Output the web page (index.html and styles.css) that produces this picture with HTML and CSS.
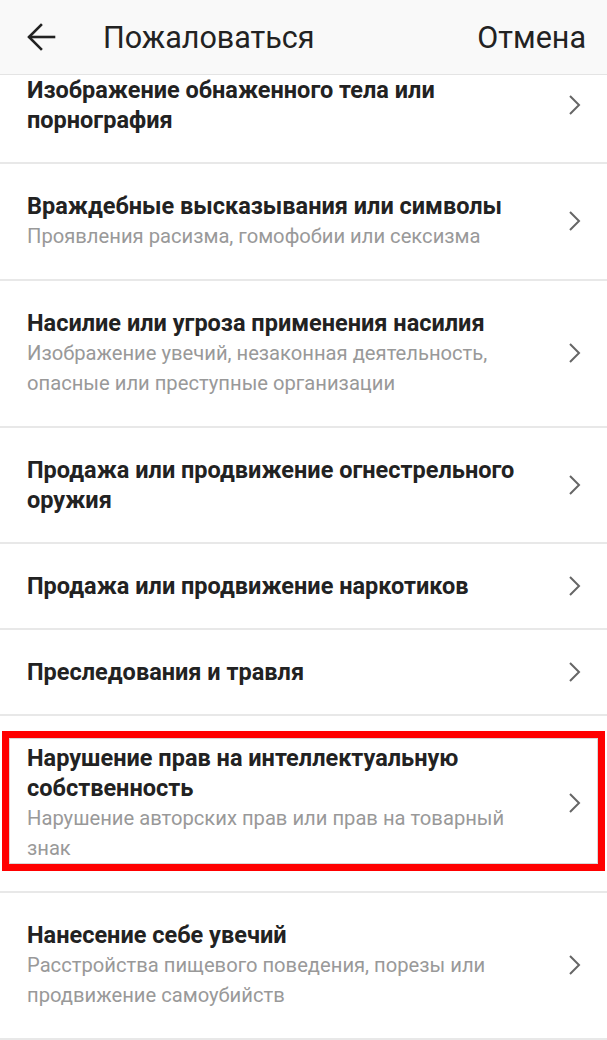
FILE: index.html
```html
<!DOCTYPE html>
<html lang="ru">
<head>
  <meta charset="UTF-8" />
  <title>Пожаловаться</title>
  <meta name="viewport" content="width=device-width, initial-scale=1" />
  <link rel="stylesheet" href="styles.css">
</head>
<body>
<div class="app">
  <header class="topbar">
    <button class="back-btn" title="Назад">
      <svg width="30" height="30" viewBox="0 0 30 30" fill="none" stroke="#222" stroke-width="2.6" stroke-linecap="square">
        <path d="M28 15H4"/>
        <path d="M15 3L3 15l12 12"/>
      </svg>
    </button>
    <h1>Пожаловаться</h1>
    <div class="cancel">Отмена</div>
  </header>

  <main class="list-wrap">
    <ul class="reasons">
      <li class="reason">
        <div class="reason-text">
          <div class="reason-title">Изображение обнаженного тела или порнография</div>
        </div>
        <svg class="chevron" width="14" height="22" viewBox="0 0 14 22"><path d="M2 2l9 9-9 9"/></svg>
      </li>
      <li class="reason">
        <div class="reason-text">
          <div class="reason-title">Враждебные высказывания или символы</div>
          <div class="reason-desc">Проявления расизма, гомофобии или сексизма</div>
        </div>
        <svg class="chevron" width="14" height="22" viewBox="0 0 14 22"><path d="M2 2l9 9-9 9"/></svg>
      </li>
      <li class="reason">
        <div class="reason-text">
          <div class="reason-title">Насилие или угроза применения насилия</div>
          <div class="reason-desc">Изображение увечий, незаконная деятельность, опасные или преступные организации</div>
        </div>
        <svg class="chevron" width="14" height="22" viewBox="0 0 14 22"><path d="M2 2l9 9-9 9"/></svg>
      </li>
      <li class="reason">
        <div class="reason-text">
          <div class="reason-title">Продажа или продвижение огнестрельного оружия</div>
        </div>
        <svg class="chevron" width="14" height="22" viewBox="0 0 14 22"><path d="M2 2l9 9-9 9"/></svg>
      </li>
      <li class="reason">
        <div class="reason-text">
          <div class="reason-title">Продажа или продвижение наркотиков</div>
        </div>
        <svg class="chevron" width="14" height="22" viewBox="0 0 14 22"><path d="M2 2l9 9-9 9"/></svg>
      </li>
      <li class="reason">
        <div class="reason-text">
          <div class="reason-title">Преследования и травля</div>
        </div>
        <svg class="chevron" width="14" height="22" viewBox="0 0 14 22"><path d="M2 2l9 9-9 9"/></svg>
      </li>
      <li class="reason marked">
        <div class="reason-text">
          <div class="reason-title">Нарушение прав на интеллектуальную собственность</div>
          <div class="reason-desc">Нарушение авторских прав или прав на товарный знак</div>
        </div>
        <svg class="chevron" width="14" height="22" viewBox="0 0 14 22"><path d="M2 2l9 9-9 9"/></svg>
        <div class="mark-frame"></div>
      </li>
      <li class="reason">
        <div class="reason-text">
          <div class="reason-title">Нанесение себе увечий</div>
          <div class="reason-desc">Расстройства пищевого поведения, порезы или продвижение самоубийств</div>
        </div>
        <svg class="chevron" width="14" height="22" viewBox="0 0 14 22"><path d="M2 2l9 9-9 9"/></svg>
      </li>
    </ul>
  </main>
</div>
</body>
</html>
```

FILE: styles.css
```css
body {
  margin: 0;
  background: #fff;
  font-family: Roboto, "Noto Sans", Arial, sans-serif;
  color: #222;
  overflow: hidden;
}

.app {
  width: 607px;
  height: 1040px;
  display: flex;
  flex-direction: column;
  overflow: hidden;
}

.topbar {
  position: relative;
  z-index: 2;
  flex-shrink: 0;
  height: 74px;
  display: flex;
  align-items: center;
  padding: 0 21px 0 25px;
  background: #f9f9f9;
  border-bottom: 1px solid #e4e4e4;
}

.back-btn {
  width: 32px;
  height: 32px;
  padding: 0;
  border: 0;
  background: none;
  display: flex;
  align-items: center;
  justify-content: center;
}

.topbar h1 {
  flex: 1;
  margin: 0 0 0 46px;
  font-size: 30.5px;
  font-weight: 400;
  color: #222;
}

.cancel {
  font-size: 30.5px;
  color: #222;
}

.list-wrap {
  flex: 1;
  overflow: hidden;
}

/* list is scrolled a little under the top bar */
.reasons {
  list-style: none;
  margin: -27px 0 0;
  padding: 0;
}

.reason {
  position: relative;
  display: flex;
  align-items: center;
  padding: 27px 25px 27px 27px;
  border-bottom: 2px solid #e8e8e8;
}

.reason-text {
  flex: 1;
  padding-right: 40px;
}

.reason-title {
  font-size: 23.5px;
  font-weight: 700;
  line-height: 30px;
  color: #222;
}

.reason-desc {
  font-size: 20.2px;
  line-height: 30.5px;
  color: #999;
}

.chevron {
  flex-shrink: 0;
  fill: none;
  stroke: #666;
  stroke-width: 2;
}

.mark-frame {
  position: absolute;
  top: 15px;
  left: 2px;
  right: 2px;
  bottom: 20px;
  border: 7px solid #ff0000;
  box-shadow: inset 0 0 0 1px #d8d8d8;
  pointer-events: none;
}
```
